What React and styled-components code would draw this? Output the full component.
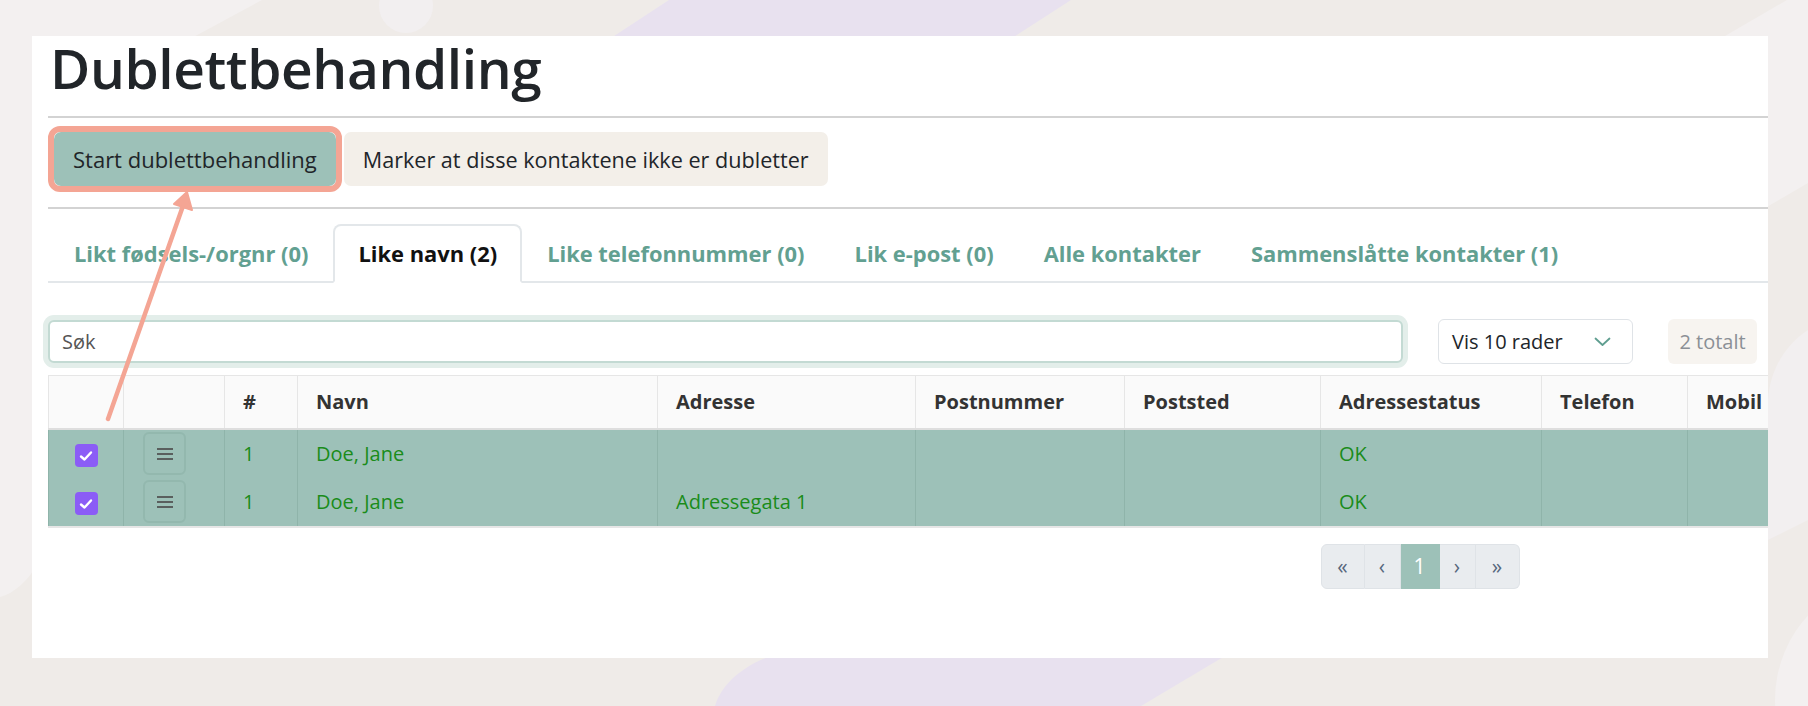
import styled, { createGlobalStyle } from 'styled-components';

const GlobalStyle = createGlobalStyle`
  * { box-sizing: border-box; }
  body {
    margin: 0;
    background: #efebe8;
    font-family: "Open Sans", "Noto Sans", sans-serif;
    color: #212529;
  }
`;

const tabs = [
  { label: 'Likt fødsels-/orgnr (0)' },
  { label: 'Like navn (2)', active: true },
  { label: 'Like telefonnummer (0)' },
  { label: 'Lik e-post (0)' },
  { label: 'Alle kontakter' },
  { label: 'Sammenslåtte kontakter (1)' },
];

const columns = [
  { key: 'check', title: '', width: 75 },
  { key: 'menu', title: '', width: 101 },
  { key: 'nr', title: '#', width: 73 },
  { key: 'navn', title: 'Navn', width: 360 },
  { key: 'adresse', title: 'Adresse', width: 258 },
  { key: 'postnr', title: 'Postnummer', width: 209 },
  { key: 'poststed', title: 'Poststed', width: 196 },
  { key: 'status', title: 'Adressestatus', width: 221 },
  { key: 'telefon', title: 'Telefon', width: 146 },
  { key: 'mobil', title: 'Mobil', width: 200 },
  { key: 'epost', title: 'E-post', width: 400 },
  { key: 'fnr', title: 'Fødselsnummer', width: 250 },
  { key: 'kundenr', title: 'Kundenummer', width: 255 },
];

const rows = [
  { nr: 1, navn: 'Doe, Jane', adresse: '', status: 'OK' },
  { nr: 1, navn: 'Doe, Jane', adresse: 'Adressegata 1', status: 'OK' },
];

const pages = [
  { label: '«', width: 44 },
  { label: '‹', width: 36 },
  { label: '1', width: 39, active: true },
  { label: '›', width: 36 },
  { label: '»', width: 44 },
];

const Backdrop = () => (
  <BackdropSvg viewBox="0 0 1808 706" preserveAspectRatio="none">
    <rect width="1808" height="706" fill="#efebe8" />
    <path d="M0 0 L262 0 L40 120 L40 560 C28 582 14 593 0 597 Z" fill="#f3f0f0" />
    <circle cx="406" cy="6" r="27" fill="#f2eff0" />
    <polygon points="669,0 1071,0 1009,40 608,40" fill="#e8e1ef" />
    <polygon points="1787,0 1808,0 1808,183 1760,211 1760,36 1725,36" fill="#f3f0f0" />
    <path d="M1808 330 C1785 345 1770 370 1768 400 L1768 540 L1808 520 Z" fill="#f2eff0" />
    <circle cx="1900" cy="700" r="125" fill="#f3f0f0" />
    <path d="M715 706 C722 682 748 660 790 650 L1235 650 L1141 706 Z" fill="#e8e1ef" />
  </BackdropSvg>
);

const Arrow = () => (
  <ArrowSvg viewBox="0 0 1808 706">
    <line x1="108" y1="419" x2="184" y2="203" stroke="#f4a594" strokeWidth="4.5" strokeLinecap="round" />
    <polygon points="187,192 192,210 174,204" fill="#f4a594" stroke="#f4a594" strokeWidth="2" strokeLinejoin="round" />
  </ArrowSvg>
);

const Checkbox = () => (
  <CheckBox>
    <svg width="14" height="12" viewBox="0 0 14 12">
      <path d="M2 6.5 L5.5 9.5 L12 2.5" fill="none" stroke="#fff" strokeWidth="2.4" strokeLinecap="round" strokeLinejoin="round" />
    </svg>
  </CheckBox>
);

const MenuButton = () => (
  <MenuBtn>
    <svg width="16" height="12" viewBox="0 0 16 12">
      <rect x="0" y="0" width="16" height="2" fill="#5a5f5e" />
      <rect x="0" y="5" width="16" height="2" fill="#5a5f5e" />
      <rect x="0" y="10" width="16" height="2" fill="#5a5f5e" />
    </svg>
  </MenuBtn>
);

const Chevron = () => (
  <svg width="17" height="10" viewBox="0 0 17 10">
    <path d="M1.5 1.5 L8.5 8 L15.5 1.5" fill="none" stroke="#5f9e90" strokeWidth="1.8" strokeLinecap="round" strokeLinejoin="round" />
  </svg>
);

const renderCell = (col, row) => {
  if (col.key === 'check') return <Checkbox />;
  if (col.key === 'menu') return <MenuButton />;
  return row[col.key] ?? '';
};

export default function App() {
  return (
    <>
      <GlobalStyle />
      <Page>
        <Backdrop />
        <Card>
          <Title>Dublettbehandling</Title>
          <Rule />
          <ButtonRow>
            <Highlight>
              <Button $bg="#9dc1b8">Start dublettbehandling</Button>
            </Highlight>
            <Button $bg="#f3efe9" $size={21.6}>Marker at disse kontaktene ikke er dubletter</Button>
          </ButtonRow>
          <Rule />
          <TabList>
            {tabs.map((t) => (
              <Tab key={t.label} $active={t.active}>{t.label}</Tab>
            ))}
          </TabList>
          <SearchRow>
            <SearchInput placeholder="Søk" />
            <Select>
              <span>Vis 10 rader</span>
              <Chevron />
            </Select>
            <Total>2 totalt</Total>
          </SearchRow>
          <TableWrap>
            <Table>
              <colgroup>
                {columns.map((c) => (
                  <col key={c.key} style={{ width: c.width }} />
                ))}
              </colgroup>
              <thead>
                <tr>
                  {columns.map((c) => (
                    <Th key={c.key}>{c.title}</Th>
                  ))}
                </tr>
              </thead>
              <tbody>
                {rows.map((r, i) => (
                  <tr key={i}>
                    {columns.map((c) => (
                      <Td key={c.key} $center={c.key === 'check'} $tight={c.key === 'menu'}>
                        {renderCell(c, r)}
                      </Td>
                    ))}
                  </tr>
                ))}
              </tbody>
            </Table>
            <Pagination>
              {pages.map((p, i) => (
                <PageBtn
                  key={i}
                  $width={p.width}
                  $active={p.active}
                  $first={i === 0}
                  $last={i === pages.length - 1}
                >
                  {p.label}
                </PageBtn>
              ))}
            </Pagination>
          </TableWrap>
        </Card>
        <Arrow />
      </Page>
    </>
  );
}

const Page = styled.div`
  position: relative;
  width: 1808px;
  height: 706px;
  overflow: hidden;
  padding: 36px 40px 0 32px;
`;

const BackdropSvg = styled.svg`
  position: absolute;
  left: 0;
  top: 0;
  width: 1808px;
  height: 706px;
  z-index: 0;
`;

const ArrowSvg = styled.svg`
  position: absolute;
  left: 0;
  top: 0;
  width: 1808px;
  height: 706px;
  z-index: 2;
  pointer-events: none;
`;

const Card = styled.div`
  position: relative;
  z-index: 1;
  width: 1736px;
  height: 622px;
  background: #fff;
  overflow: hidden;
  padding-left: 16px;
`;

const Title = styled.h1`
  margin: 0 0 16px 2px;
  font-size: 55px;
  font-weight: 600;
  line-height: 64px;
  color: #212529;
  letter-spacing: -0.4px;
`;

const Rule = styled.div`
  border-top: 2px solid #d3d3d3;
`;

const ButtonRow = styled.div`
  display: flex;
  align-items: center;
  gap: 2px;
  padding: 8px 0 15px;
`;

const Highlight = styled.div`
  display: flex;
  border: 6px solid #f4a594;
  border-radius: 12px;
`;

const Button = styled.button`
  height: 54px;
  padding: 0 18px;
  border: 1px solid transparent;
  border-radius: 7px;
  background: ${(p) => p.$bg};
  color: #212529;
  font-family: inherit;
  font-size: ${(p) => p.$size || 22}px;
  white-space: nowrap;
`;

const TabList = styled.div`
  display: flex;
  margin-top: 15px;
  padding-left: 1px;
  border-bottom: 2px solid #e3e7ea;
`;

const Tab = styled.div`
  height: 59px;
  margin-bottom: -2px;
  padding: 0 23px;
  display: flex;
  align-items: center;
  font-size: 21.9px;
  font-weight: 700;
  white-space: nowrap;
  border: 2px solid ${(p) => (p.$active ? '#e3e7ea' : 'transparent')};
  border-bottom-color: ${(p) => (p.$active ? '#fff' : 'transparent')};
  border-radius: 8px 8px 0 0;
  background: ${(p) => (p.$active ? '#fff' : 'transparent')};
  color: ${(p) => (p.$active ? '#111' : '#62a091')};
`;

const SearchRow = styled.div`
  display: flex;
  align-items: center;
  gap: 35px;
  width: 1709px;
  margin-top: 36px;
`;

const SearchInput = styled.input`
  flex: 1;
  height: 43px;
  padding: 0 12px;
  border: 2px solid #c3dad3;
  border-radius: 6px;
  box-shadow: 0 0 0 5px #e3eeea;
  font-family: inherit;
  font-size: 20px;
  color: #212529;
  outline: none;

  &::placeholder {
    color: #555;
  }
`;

const Select = styled.div`
  width: 195px;
  height: 45px;
  padding: 0 21px 0 13px;
  display: flex;
  align-items: center;
  justify-content: space-between;
  border: 1px solid #dfe3e7;
  border-radius: 6px;
  font-size: 20px;
  color: #212529;
`;

const Total = styled.div`
  width: 89px;
  height: 45px;
  display: flex;
  align-items: center;
  justify-content: center;
  border-radius: 6px;
  background: #f7f4f0;
  font-size: 20px;
  color: #8b9096;
`;

const TableWrap = styled.div`
  width: 2744px;
  margin-top: 11px;
`;

const Table = styled.table`
  width: 2744px;
  table-layout: fixed;
  border-collapse: collapse;
  border-bottom: 2px solid #e6e6e6;
`;

const Th = styled.th`
  height: 53px;
  padding: 0 18px;
  text-align: left;
  font-size: 20px;
  font-weight: 700;
  color: #333;
  background: #fafafa;
  border: 1px solid #e6e6e6;
  border-bottom: 2px solid #dedede;
`;

const Td = styled.td`
  height: 49px;
  padding: ${(p) => (p.$tight ? '0 19px' : '0 18px')};
  text-align: ${(p) => (p.$center ? 'center' : 'left')};
  vertical-align: middle;
  font-size: 20px;
  color: #1a8c1a;
  background: #9dc1b8;
  border-left: 1px solid #8fb4aa;
  border-right: 1px solid #8fb4aa;
`;

const CheckBox = styled.span`
  display: inline-flex;
  align-items: center;
  justify-content: center;
  width: 23px;
  height: 23px;
  border-radius: 4px;
  background: #8b5cf6;
  vertical-align: middle;
`;

const MenuBtn = styled.span`
  display: flex;
  align-items: center;
  justify-content: center;
  width: 43px;
  height: 43px;
  border: 2px solid #93b8ae;
  border-radius: 6px;
`;

const Pagination = styled.div`
  display: flex;
  justify-content: center;
  margin-top: 16px;
`;

const PageBtn = styled.div`
  width: ${(p) => p.$width}px;
  height: 45px;
  display: flex;
  align-items: center;
  justify-content: center;
  font-size: 21px;
  background: ${(p) => (p.$active ? '#9dc1b8' : '#e9ecef')};
  color: ${(p) => (p.$active ? '#fff' : '#56677c')};
  border: 1px solid ${(p) => (p.$active ? '#9dc1b8' : '#dfe3e7')};
  border-left-width: ${(p) => (p.$first ? '1px' : '0')};
  border-radius: ${(p) => (p.$first ? '6px 0 0 6px' : p.$last ? '0 6px 6px 0' : '0')};
`;
